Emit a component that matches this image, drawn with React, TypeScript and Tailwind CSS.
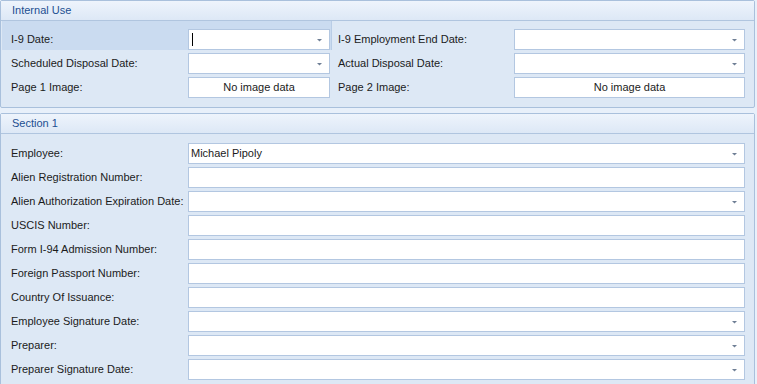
import React from "react";

type Row = { label: string; value?: string; combo?: boolean; focus?: boolean };

const sectionRows: Row[] = [
  { label: "Employee:", value: "Michael Pipoly", combo: true },
  { label: "Alien Registration Number:" },
  { label: "Alien Authorization Expiration Date:", combo: true },
  { label: "USCIS Number:" },
  { label: "Form I-94 Admission Number:" },
  { label: "Foreign Passport Number:" },
  { label: "Country Of Issuance:" },
  { label: "Employee Signature Date:", combo: true },
  { label: "Preparer:", combo: true },
  { label: "Preparer Signature Date:", combo: true },
];

function Arrow() {
  return (
    <svg width="7" height="4" viewBox="0 0 7 4" className="shrink-0">
      <path d="M1 1h5L3.5 3.5z" fill="#6f7f95" />
    </svg>
  );
}

function Field({ value, combo, focus, width }: { value?: string; combo?: boolean; focus?: boolean; width?: string }) {
  return (
    <div className={`${width ?? "flex-1"} h-[21px] bg-white border border-[#b3c7e1] flex items-center pl-[2px] pr-[6px]`}>
      {focus && <span className="w-px h-[13px] bg-black ml-px" />}
      <span className="flex-1 truncate">{value}</span>
      {combo && <Arrow />}
    </div>
  );
}

function ImageBox({ width }: { width: string }) {
  return (
    <div className={`${width} h-[21px] bg-white border border-[#b3c7e1] flex items-center justify-center`}>
      No image data
    </div>
  );
}

function GroupHeader({ title }: { title: string }) {
  return (
    <div className="h-[20px] border-b border-[#b0c5df] bg-gradient-to-b from-[#eef4fc] to-[#dde8f6] pl-[11px] flex items-center text-[#1d4f91]">
      {title}
    </div>
  );
}

export default function App() {
  return (
    <div
      className="w-[757px] h-[384px] overflow-hidden bg-[#e8f0fa] text-[11px] text-[#1b1b1b] whitespace-nowrap"
      style={{ fontFamily: '"Liberation Sans", Tahoma, Arial, sans-serif' }}
    >
      {/* Internal Use */}
      <div className="w-[755px] h-[108px] border border-[#a9c0dc] rounded-[2px] bg-[#dde8f5] flex flex-col">
        <GroupHeader title="Internal Use" />
        <div className="relative flex-1 pt-[8px] pl-[10px] pr-[9px] flex flex-col gap-[3px]">
          <div className="absolute left-[1px] top-0 w-[330px] h-[29px] bg-[#cadbf0] border-r border-[#b9cde6]" />
          <div className="relative flex items-center">
            <span className="w-[177px]">I-9 Date:</span>
            <Field combo focus width="w-[142px]" />
            <span className="w-[176px] ml-[8px]">I-9 Employment End Date:</span>
            <Field combo width="w-[231px]" />
          </div>
          <div className="relative flex items-center">
            <span className="w-[177px]">Scheduled Disposal Date:</span>
            <Field combo width="w-[142px]" />
            <span className="w-[176px] ml-[8px]">Actual Disposal Date:</span>
            <Field combo width="w-[231px]" />
          </div>
          <div className="relative flex items-center">
            <span className="w-[177px]">Page 1 Image:</span>
            <ImageBox width="w-[142px]" />
            <span className="w-[176px] ml-[8px]">Page 2 Image:</span>
            <ImageBox width="w-[231px]" />
          </div>
        </div>
      </div>

      {/* Section 1 */}
      <div className="mt-[5px] w-[755px] h-[300px] border border-[#a9c0dc] rounded-[2px] bg-[#dde8f5] flex flex-col">
        <GroupHeader title="Section 1" />
        <div className="pt-[9px] pl-[10px] pr-[9px] flex flex-col gap-[3px]">
          {sectionRows.map((r, i) => (
            <div key={i} className="flex items-center">
              <span className="w-[177px] shrink-0">{r.label}</span>
              <Field value={r.value} combo={r.combo} />
            </div>
          ))}
        </div>
      </div>
    </div>
  );
}
